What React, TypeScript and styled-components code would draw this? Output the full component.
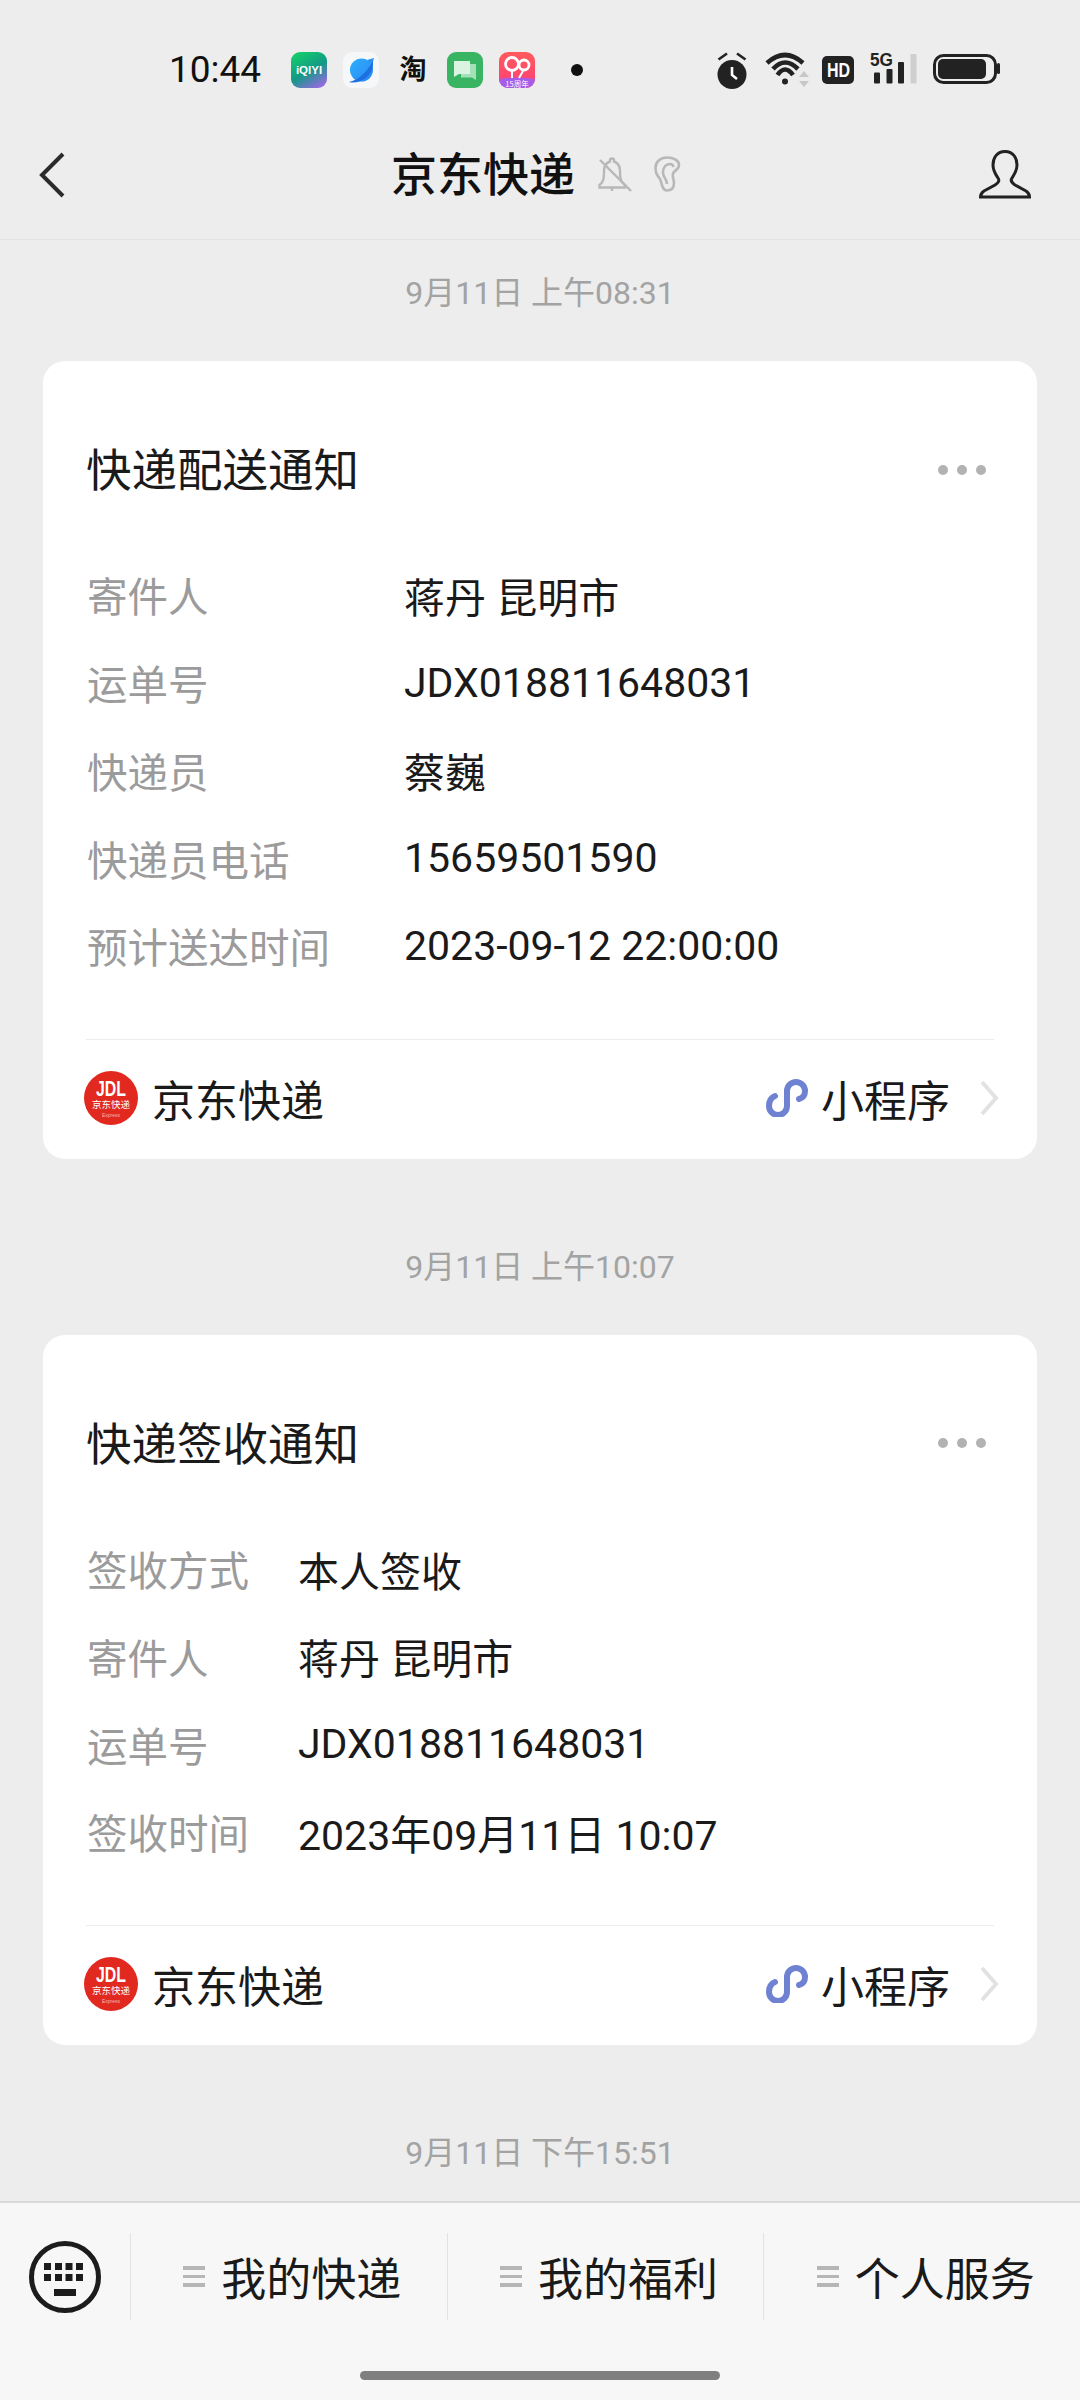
import React from "react";
import styled, { createGlobalStyle } from "styled-components";

const GlobalStyle = createGlobalStyle`
	html, body {
		margin: 0;
		padding: 0;
		background: #ededed;
	}
	* {
		box-sizing: border-box;
	}
	body {
		font-family: Roboto, "Noto Sans CJK SC", "Noto Sans", sans-serif;
		color: #1a1a1a;
	}
`;

const StatusBar = () => (
	<Status>
		<Clock>10:44</Clock>
		<AppTray>
			<AppIcon $bg="linear-gradient(150deg, #16d566 0%, #129a86 52%, #b45ff5 100%)">
				<IqiyiMark>iQIYI</IqiyiMark>
			</AppIcon>
			<AppIcon $bg="#f6f7f9">
				<svg width="36" height="36" viewBox="0 0 36 36">
					<defs>
						<linearGradient id="planet" x1="0" y1="0" x2="1" y2="1">
							<stop offset="0" stopColor="#2fb0ff" />
							<stop offset="1" stopColor="#2a86f0" />
						</linearGradient>
					</defs>
					<circle cx="18.500" cy="18" r="11.500" fill="url(#planet)" />
					<path d="M24 8 L31 6 L29 13 Z" fill="#2a93f2" />
					<path d="M6 30 Q20 27 30 9 Q31 19 23 26 Q14 32 6 30 Z" fill="#1e6fe2" />
				</svg>
			</AppIcon>
			<TaobaoGlyph>淘</TaobaoGlyph>
			<AppIcon $bg="#38b463">
				<svg width="36" height="36" viewBox="0 0 36 36">
					<path d="M14 12 H29 V28 L25 25.500 H14 Z" fill="#a3e2b8" />
					<path d="M7 9 H23 V22 H12 L7 25 Z" fill="#daf4e1" />
				</svg>
			</AppIcon>
			<AppIcon $bg="linear-gradient(180deg, #ff5a5c 0%, #ff3f78 100%)">
				<svg width="36" height="36" viewBox="0 0 36 36">
					<path d="M0 27 Q18 24 36 27 V36 H0 Z" fill="#a65ce8" />
					<circle cx="13" cy="12" r="6.500" stroke="#fff" strokeWidth="2.800" fill="none" />
					<circle cx="25" cy="13" r="5" stroke="#fff" strokeWidth="2.800" fill="none" />
					<path d="M13 19 V26 M24 19 L20 26" stroke="#fff" strokeWidth="2" />
					<text x="18" y="34.500" fontSize="7.500" fill="#fff" textAnchor="middle" fontFamily="Noto Sans CJK SC">
						15周年
					</text>
				</svg>
			</AppIcon>
			<NoticeDot />
		</AppTray>
		<SystemTray>
			<svg width="36" height="40" viewBox="0 0 36 40">
				<circle cx="18" cy="24.500" r="14.500" fill="#222" />
				<path d="M4.500 9.500 L13 3.500 M31.500 9.500 L23 3.500" stroke="#222" strokeWidth="2.600" />
				<path d="M18 17 V25 L23 29" stroke="#fff" strokeWidth="2.600" fill="none" />
			</svg>
			<svg width="48" height="40" viewBox="0 0 48 40">
				<path d="M5 13 Q23 -3 41 13" stroke="#222" strokeWidth="4.600" fill="none" />
				<path d="M11 19 Q23 6 36 19" stroke="#222" strokeWidth="4.600" fill="none" />
				<path d="M15.500 25 Q23 14 31 25" stroke="#222" strokeWidth="4.600" fill="none" />
				<circle cx="23" cy="31.500" r="3" fill="#222" />
				<path d="M37 27 H47 L42 21 Z M37 31 H47 L42 37 Z" fill="#c8c8c8" />
			</svg>
			<HdBadge>
				<span>HD</span>
			</HdBadge>
			<svg width="52" height="40" viewBox="0 0 52 40">
				<text x="4" y="16" fontSize="19" fontWeight="700" fill="#222" textLength="23" lengthAdjust="spacingAndGlyphs" fontFamily="Liberation Sans">
					5G
				</text>
				<rect x="8" y="22.500" width="6" height="11" rx="1" fill="#222" />
				<rect x="20.500" y="19" width="6" height="14.500" rx="1" fill="#222" />
				<rect x="32" y="12" width="6" height="21.500" rx="1" fill="#222" />
				<rect x="44.500" y="4" width="6" height="29.500" rx="1" fill="#cfcfcf" />
			</svg>
			<svg width="70" height="40" viewBox="0 0 70 40">
				<rect x="4.500" y="5.500" width="61" height="27" rx="9" stroke="#222" strokeWidth="3" fill="none" />
				<rect x="8" y="9" width="48" height="20" rx="5" fill="#222" />
				<rect x="67" y="13" width="3" height="11" rx="1.500" fill="#222" />
			</svg>
		</SystemTray>
	</Status>
);

const NavigationBar = () => (
	<Nav>
		<svg width="28" height="48" viewBox="0 0 28 48">
			<path d="M25 3 L4 24 L25 45" stroke="#2b2b2b" strokeWidth="4" fill="none" />
		</svg>
		<NavCenter>
			<NavTitle>京东快递</NavTitle>
			<svg width="36" height="40" viewBox="0 0 36 40" fill="none" stroke="#b8b8b8" strokeWidth="2.400">
				<path d="M2.500 32.500 V30 C7 27 7 22 7 16 C7 10.500 10 7.500 13 6.500 V5 C13 3 17 3 17 5 V6.500 C20 7.500 23 10.500 23 16 C23 22 23 27 28 30 V32.500 Z" />
				<path d="M15 33 V36" />
				<path d="M3 5 L34 36" />
			</svg>
			<EarIcon width="28" height="40" viewBox="0 0 28 40" fill="none" stroke="#b8b8b8" strokeWidth="2.600">
				<path d="M12.700 35.500 C8 35.500 8 28 6 24 C3 20 1.500 18 1.500 13 C1.500 7 6 2.500 13 2.500 C20 2.500 25 5.500 25 10 C25 14 22 15 20 17 C17 20 20 24 20 28 C20 33 17 35.500 12.700 35.500 Z" />
				<path d="M9 18 C9 12 12 9 16 9 C18 9 19 10 19.500 12" />
				<path d="M9 18 C9 22 13 24 13 29" />
			</EarIcon>
		</NavCenter>
		<PersonSlot>
			<svg width="52" height="49" viewBox="0 0 52 49">
				<path
					d="M26 1.500 C17 1.500 14 9 14 15 C14 21 17 25 19 28 C21 31 19 33 16 35 L5 41 C2 43 1.500 45 1.500 47 H50.500 C50.500 45 50 43 47 41 L36 35 C33 33 31 31 33 28 C35 25 38 21 38 15 C38 9 35 1.500 26 1.500 Z"
					stroke="#222"
					strokeWidth="3"
					fill="none"
				/>
			</svg>
		</PersonSlot>
	</Nav>
);

type Field = { label: string; value: string };

const JdlLogo = () => (
	<svg width="54" height="54" viewBox="0 0 54 54">
		<circle cx="27" cy="27" r="27" fill="#e1291f" />
		<text x="12" y="25" fontSize="22" fontWeight="700" fill="#fff" textLength="30" lengthAdjust="spacingAndGlyphs" fontFamily="Liberation Sans">
			JDL
		</text>
		<text x="27" y="37" fontSize="9.500" fill="#fff" textAnchor="middle" fontFamily="Noto Sans CJK SC">
			京东快递
		</text>
		<text x="27" y="45.500" fontSize="5" fill="#f6b9b2" textAnchor="middle" fontFamily="Liberation Sans">
			Express
		</text>
	</svg>
);

const MessageCard = ({
	title,
	labelWidth,
	fields,
}: {
	title: string;
	labelWidth: number;
	fields: Field[];
}) => (
	<Card>
		<CardHeader>
			<CardTitle>{title}</CardTitle>
			<MoreDots>
				<i />
				<i />
				<i />
			</MoreDots>
		</CardHeader>
		<FieldList>
			{fields.map((field) => (
				<FieldRow key={field.label} $labelWidth={labelWidth}>
					<FieldLabel>{field.label}</FieldLabel>
					<FieldValue>{field.value}</FieldValue>
				</FieldRow>
			))}
		</FieldList>
		<CardDivider />
		<CardFooter>
			<JdlLogo />
			<FooterName>京东快递</FooterName>
			<svg width="42" height="38" viewBox="0 0 42 38">
				<path
					d="M9 17 C4 19 3 24 3 27 A9 9 0 0 0 21 27 V12 A9 9 0 0 1 39 12 C39 16 37 19 33 20"
					stroke="#6f82d2"
					strokeWidth="6"
					strokeLinecap="round"
					fill="none"
				/>
			</svg>
			<FooterKind>小程序</FooterKind>
			<FooterChevron width="20" height="36" viewBox="0 0 20 36">
				<path d="M3 2 L17 18 L3 34" stroke="#e2e2e2" strokeWidth="4" fill="none" />
			</FooterChevron>
		</CardFooter>
	</Card>
);

const MenuTab = ({ children }: { children: string }) => (
	<Tab>
		<TabLines>
			<i />
			<i />
			<i />
		</TabLines>
		{children}
	</Tab>
);

export default function App() {
	return (
		<Page>
			<GlobalStyle />
			<StatusBar />
			<NavigationBar />
			<Feed>
				<Stamp>9月11日 上午08:31</Stamp>
				<MessageCard
					title="快递配送通知"
					labelWidth={317}
					fields={[
						{ label: "寄件人", value: "蒋丹 昆明市" },
						{ label: "运单号", value: "JDX018811648031" },
						{ label: "快递员", value: "蔡巍" },
						{ label: "快递员电话", value: "15659501590" },
						{ label: "预计送达时间", value: "2023-09-12 22:00:00" },
					]}
				/>
				<Stamp>9月11日 上午10:07</Stamp>
				<MessageCard
					title="快递签收通知"
					labelWidth={211}
					fields={[
						{ label: "签收方式", value: "本人签收" },
						{ label: "寄件人", value: "蒋丹 昆明市" },
						{ label: "运单号", value: "JDX018811648031" },
						{ label: "签收时间", value: "2023年09月11日 10:07" },
					]}
				/>
				<Stamp>9月11日 下午15:51</Stamp>
			</Feed>
			<BottomBar>
				<MenuRow>
					<KeyboardCell>
						<svg width="74" height="74" viewBox="0 0 74 74">
							<circle cx="37" cy="37" r="33.500" stroke="#1c1c1c" strokeWidth="5" fill="none" />
							<path
								d="M16 23 h7 v7 h-7 Z M27 23 h7 v7 h-7 Z M37.500 23 h7 v7 h-7 Z M48 23 h7 v7 h-7 Z M16 34 h7 v7 h-7 Z M27 34 h7 v7 h-7 Z M37.500 34 h7 v7 h-7 Z M48 34 h7 v7 h-7 Z M26 49 h22 v7 h-22 Z"
								fill="#1c1c1c"
							/>
						</svg>
					</KeyboardCell>
					<MenuTab>我的快递</MenuTab>
					<MenuTab>我的福利</MenuTab>
					<MenuTab>个人服务</MenuTab>
				</MenuRow>
				<HomeIndicator />
			</BottomBar>
		</Page>
	);
}

const Page = styled.div`
	width: 1080px;
	height: 2400px;
	display: flex;
	flex-direction: column;
	overflow: hidden;
	background: #ededed;
`;

const Status = styled.div`
	height: 110px;
	flex: none;
	padding: 30px 80px 0 169px;
	display: flex;
	align-items: center;
`;

const Clock = styled.div`
	width: 122px;
	font-size: 37px;
	line-height: 40px;
	color: #111;
`;

const AppTray = styled.div`
	display: flex;
	align-items: center;
	gap: 16px;
`;

const AppIcon = styled.div<{ $bg: string }>`
	width: 36px;
	height: 36px;
	border-radius: 9px;
	overflow: hidden;
	background: ${(p) => p.$bg};
	display: flex;
	align-items: center;
	justify-content: center;
`;

const IqiyiMark = styled.span`
	font-family: "Liberation Sans", sans-serif;
	font-size: 11.500px;
	font-weight: 700;
	color: #fff;
`;

const TaobaoGlyph = styled.span`
	width: 36px;
	text-align: center;
	font-size: 27px;
	line-height: 36px;
	font-weight: 700;
	color: #111;
`;

const NoticeDot = styled.span`
	width: 12px;
	height: 12px;
	margin-left: 20px;
	border-radius: 50%;
	background: #111;
`;

const SystemTray = styled.div`
	margin-left: auto;
	display: flex;
	align-items: center;
	gap: 12px;
`;

const HdBadge = styled.div`
	width: 32px;
	height: 28px;
	border-radius: 5px;
	background: #222;
	display: flex;
	align-items: center;
	justify-content: center;

	span {
		font-family: "Liberation Sans", sans-serif;
		font-size: 20px;
		font-weight: 700;
		color: #fff;
		transform: scaleX(0.8);
	}
`;

const Nav = styled.div`
	height: 130px;
	flex: none;
	padding-left: 38px;
	display: grid;
	grid-template-columns: 353px auto 1fr;
	align-items: center;
	border-bottom: 1px solid #e3e3e3;
`;

const NavCenter = styled.div`
	display: flex;
	align-items: center;
`;

const NavTitle = styled.div`
	font-size: 46px;
	line-height: 60px;
	font-weight: 500;
	color: #111;
	margin-right: 22px;
`;

const EarIcon = styled.svg`
	margin-left: 21px;
`;

const PersonSlot = styled.div`
	justify-self: end;
	padding-right: 49px;
	display: flex;
`;

const Feed = styled.div`
	flex: 1;
	min-height: 0;
	padding: 26px 43px 0;
	overflow: hidden;
`;

const Stamp = styled.div`
	height: 52px;
	margin: 81px 0 43px;
	text-align: center;
	font-size: 32px;
	line-height: 54px;
	color: #a3a3a3;

	&:first-child {
		margin-top: 0;
	}
`;

const Card = styled.div`
	width: 994px;
	border-radius: 22px;
	background: #fff;
`;

const CardHeader = styled.div`
	height: 140px;
	padding: 82px 44px 0 43px;
	display: flex;
	justify-content: space-between;
	align-items: center;
`;

const CardTitle = styled.div`
	font-size: 45.500px;
	line-height: 60px;
	color: #1a1a1a;
`;

const MoreDots = styled.div`
	display: flex;
	gap: 9px;
	margin-right: 7px;
	margin-top: -5px;

	i {
		width: 10px;
		height: 10px;
		border-radius: 50%;
		background: #b2b2b2;
	}
`;

const FieldList = styled.div`
	margin-top: 50px;
	padding: 0 0 49px 44px;
`;

const FieldRow = styled.div<{ $labelWidth: number }>`
	height: 87.750px;
	display: grid;
	grid-template-columns: ${(p) => p.$labelWidth}px 1fr;
	align-items: center;
	font-size: 41px;
`;

const FieldLabel = styled.span`
	font-size: 40.500px;
	color: #9b9b9b;
`;

const FieldValue = styled.span`
	color: #1a1a1a;
`;

const CardDivider = styled.div`
	height: 1px;
	margin: 0 43px;
	background: #ececec;
`;

const CardFooter = styled.div`
	height: 119px;
	padding: 0 38px 2px 41px;
	display: flex;
	align-items: center;
`;

const FooterName = styled.span`
	margin-left: 14px;
	font-size: 43px;
	color: #1a1a1a;
	flex: 1;
`;

const FooterKind = styled.span`
	margin-left: 13px;
	font-size: 43px;
	color: #1a1a1a;
`;

const FooterChevron = styled.svg`
	margin-left: 29px;
`;

const BottomBar = styled.div`
	height: 199px;
	flex: none;
	border-top: 2px solid #d9d9d9;
	background: #f7f7f7;
	display: flex;
	flex-direction: column;
`;

const MenuRow = styled.div`
	height: 87px;
	margin-top: 30px;
	display: flex;
`;

const KeyboardCell = styled.div`
	width: 130px;
	flex: none;
	display: flex;
	align-items: center;
	justify-content: center;
`;

const Tab = styled.div`
	flex: 1;
	padding-left: 7px;
	display: flex;
	align-items: center;
	justify-content: center;
	gap: 16px;
	border-left: 1px solid #e3e3e3;
	font-size: 45px;
	color: #1a1a1a;
`;

const TabLines = styled.span`
	width: 22px;
	display: flex;
	flex-direction: column;
	gap: 5px;

	i {
		height: 3.500px;
		background: #b6b6b6;
	}
`;

const HomeIndicator = styled.div`
	width: 360px;
	height: 9px;
	margin: 51px auto 0;
	border-radius: 5px;
	background: #7f7f7f;
`;
